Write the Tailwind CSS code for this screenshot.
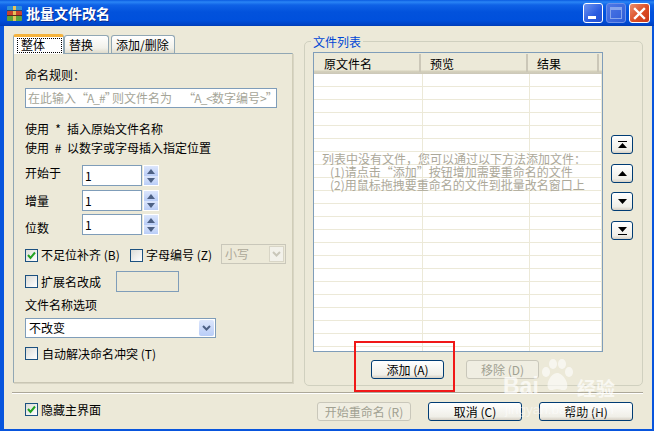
<!DOCTYPE html>
<html lang="zh-CN">
<head>
    <meta charset="UTF-8">
    <meta name="viewport" content="width=device-width, initial-scale=1.0">
    <title>批量文件改名</title>
    <script src="https://cdn.jsdelivr.net/npm/@tailwindcss/browser@4"></script>
</head>
<body class="bg-[#ece9d8] overflow-hidden">

<div class="relative w-[654px] h-[431px] flex flex-col bg-[#0855dd] text-[12px] leading-[14px] text-black font-['Noto_Sans_CJK_SC','Noto_Sans',sans-serif] overflow-hidden">

    <!-- Title bar -->
    <div class="h-[26px] flex items-center shrink-0 bg-[linear-gradient(to_bottom,#0a5be0_0,#2a85f5_2px,#0f62e6_5px,#0252dc_12px,#0050dc_20px,#0042c4_25px,#003bb0_26px)]">
        <svg class="ml-[6px] w-[17px] h-[17px]" viewBox="0 0 17 17">
            <rect x="1" y="1" width="15" height="5" rx="1" fill="#2f8fd8"/>
            <rect x="1" y="6" width="15" height="5" rx="1" fill="#c8452e"/>
            <rect x="1" y="11" width="15" height="5" rx="1" fill="#5fa33a"/>
            <rect x="7" y="1" width="3" height="15" fill="#e6c25a"/>
            <rect x="1" y="5" width="15" height="1" fill="#1f4a70"/>
            <rect x="1" y="10" width="15" height="1" fill="#5a2a20"/>
        </svg>
        <span class="ml-[3px] text-[14px] font-bold text-white [text-shadow:1px_1px_0_#0f2f90]">批量文件改名</span>
        <div class="ml-auto mr-[4px] flex gap-[3px] items-center">
            <div class="w-[20px] h-[20px] rounded-[3px] border border-white bg-[linear-gradient(135deg,#6d93f0,#2a5ce0_60%,#2450d0)] flex items-end">
                <div class="ml-[4px] mb-[3px] w-[8px] h-[3px] bg-white"></div>
            </div>
            <div class="w-[20px] h-[20px] rounded-[3px] border border-[#6d90e8] bg-[linear-gradient(135deg,#4f78e6,#2d5cd8)] flex items-center justify-center">
                <div class="w-[12px] h-[12px] border border-[#86a4ec] border-t-[3px]"></div>
            </div>
            <div class="w-[21px] h-[20px] rounded-[3px] border border-white bg-[linear-gradient(135deg,#ec8e6e,#dc4d24_55%,#c8381a)] flex items-center justify-center">
                <svg class="w-[13px] h-[13px]" viewBox="0 0 13 13"><path d="M2 2 L11 11 M11 2 L2 11" stroke="#fff" stroke-width="2.4" stroke-linecap="square"/></svg>
            </div>
        </div>
    </div>

    <!-- Client area -->
    <div class="h-[403px] ml-[4px] mr-[2px] shrink-0 bg-[#ece9d8] flex flex-col">
        <div class="h-[366px] flex shrink-0">

            <!-- Left tabs -->
            <div class="ml-[9px] mt-[8px] w-[280px] flex flex-col">
                <div class="h-[19px] flex items-end relative z-10">
                    <div class="w-[51px] h-[20px] -mb-[1px] bg-white border-x border-[#91a7b4] border-t-[3px] border-t-[#f5b33c] rounded-t-[3px] pl-[3px] pt-[1px]">
                        <div class="w-[45px] h-[15px] border border-dotted border-black px-[3px] leading-[12px]">整体</div>
                    </div>
                    <div class="w-[45px] h-[18px] bg-[linear-gradient(to_bottom,#fff,#f2f1ea_70%,#dedbcc)] border border-b-0 border-[#91a7b4] rounded-t-[3px] pl-[4px] pt-[1px] leading-[15px]">替换</div>
                    <div class="ml-[2px] w-[64px] h-[18px] bg-[linear-gradient(to_bottom,#fff,#f2f1ea_70%,#dedbcc)] border border-b-0 border-[#91a7b4] rounded-t-[3px] pl-[4px] pt-[1px] leading-[16px]">添加/删除</div>
                </div>
                <div class="h-[330px] w-[280px] border border-[#91a7b4] border-r-[#d0cdb8] border-b-[#c9c6b4] shadow-[1px_1px_0_#d8d5c4] pl-[11px] flex flex-col">
                    <div class="mt-[14px] h-[14px]">命名规则：</div>
                    <div class="mt-[6px] w-[252px] h-[20px] border border-[#7f9db9] bg-white pl-[2px] text-[#a5a598] leading-[18px] whitespace-nowrap overflow-hidden">在此输入<span class="inline-block w-[36px] text-center tracking-[-1px]">“A_#”</span>则文件名为<span class="inline-block w-[40px] text-right tracking-[-1px]">“A_&lt;</span>数字编号<span class="tracking-[-1px]">&gt;”</span></div>
                    <div class="mt-[14px] h-[14px] whitespace-nowrap">使用<span class="inline-block w-[18px] text-center">*</span>插入原始文件名称</div>
                    <div class="mt-[5px] h-[14px] whitespace-nowrap">使用<span class="inline-block w-[18px] text-center">#</span>以数字或字母插入指定位置</div>

                    <div class="mt-[10px] flex h-[21px]">
                        <div class="w-[57px] mt-[1px]">开始于</div>
                        <input class="w-[60px] h-[21px] border border-[#7f9db9] bg-white px-[2px] outline-none" value="1">
                        <div class="ml-[1px] w-[16px] h-[21px] border border-white flex flex-col">
                            <div class="h-[10px] bg-[linear-gradient(to_bottom,#dce6fc,#b9cdf7)] flex items-center justify-center"><svg class="w-[8px] h-[5px]" viewBox="0 0 8 5"><path d="M4 0 L8 5 L0 5 Z" fill="#4d6185"/></svg></div>
                            <div class="h-[9px] bg-[linear-gradient(to_bottom,#dce6fc,#b9cdf7)] flex items-center justify-center"><svg class="w-[8px] h-[5px]" viewBox="0 0 8 5"><path d="M0 0 L8 0 L4 5 Z" fill="#4d6185"/></svg></div>
                        </div>
                    </div>
                    <div class="mt-[4px] flex h-[21px]">
                        <div class="w-[57px] mt-[4px]">增量</div>
                        <input class="w-[60px] h-[21px] border border-[#7f9db9] bg-white px-[2px] outline-none" value="1">
                        <div class="ml-[1px] w-[16px] h-[21px] border border-white flex flex-col">
                            <div class="h-[10px] bg-[linear-gradient(to_bottom,#dce6fc,#b9cdf7)] flex items-center justify-center"><svg class="w-[8px] h-[5px]" viewBox="0 0 8 5"><path d="M4 0 L8 5 L0 5 Z" fill="#4d6185"/></svg></div>
                            <div class="h-[9px] bg-[linear-gradient(to_bottom,#dce6fc,#b9cdf7)] flex items-center justify-center"><svg class="w-[8px] h-[5px]" viewBox="0 0 8 5"><path d="M0 0 L8 0 L4 5 Z" fill="#4d6185"/></svg></div>
                        </div>
                    </div>
                    <div class="mt-[3px] flex h-[21px]">
                        <div class="w-[57px] mt-[7px]">位数</div>
                        <input class="w-[60px] h-[21px] border border-[#7f9db9] bg-white px-[2px] outline-none" value="1">
                        <div class="ml-[1px] w-[16px] h-[21px] border border-white flex flex-col">
                            <div class="h-[10px] bg-[linear-gradient(to_bottom,#dce6fc,#b9cdf7)] flex items-center justify-center"><svg class="w-[8px] h-[5px]" viewBox="0 0 8 5"><path d="M4 0 L8 5 L0 5 Z" fill="#4d6185"/></svg></div>
                            <div class="h-[9px] bg-[linear-gradient(to_bottom,#dce6fc,#b9cdf7)] flex items-center justify-center"><svg class="w-[8px] h-[5px]" viewBox="0 0 8 5"><path d="M0 0 L8 0 L4 5 Z" fill="#4d6185"/></svg></div>
                        </div>
                    </div>

                    <div class="mt-[9px] h-[20px] flex items-center">
                        <div class="w-[13px] h-[13px] mt-[2px] border border-[#1c5180] bg-[linear-gradient(135deg,#dcdcd7,#fff)] flex items-center justify-center">
                            <svg class="w-[9px] h-[9px]" viewBox="0 0 9 9"><path d="M1 4 L3.5 7 L8 1.5" fill="none" stroke="#21a121" stroke-width="2"/></svg>
                        </div>
                        <span class="ml-[3px] w-[89px] mt-[2px] whitespace-pre">不足位补齐 (B)</span>
                        <div class="w-[13px] h-[13px] mt-[2px] border border-[#1c5180] bg-[linear-gradient(135deg,#dcdcd7,#fff)]"></div>
                        <span class="ml-[3px] w-[75px] mt-[2px] whitespace-pre">字母编号 (Z)</span>
                        <div class="w-[65px] h-[20px] border border-[#c9c7ba] bg-[#ece9d8] flex items-center pl-[3px] text-[#aca899]">
                            小写
                            <div class="ml-auto mr-[1px] w-[15px] h-[16px] bg-[#f2f1ea] border border-[#d8d5c6] flex items-center justify-center"><svg class="w-[9px] h-[6px]" viewBox="0 0 9 6"><path d="M1 1 L4.5 4.5 L8 1" fill="none" stroke="#c9c7ba" stroke-width="2"/></svg></div>
                        </div>
                    </div>

                    <div class="mt-[7px] h-[21px] flex items-center">
                        <div class="w-[13px] h-[13px] border border-[#1c5180] bg-[linear-gradient(135deg,#dcdcd7,#fff)]"></div>
                        <span class="ml-[3px] w-[75px]">扩展名改成</span>
                        <div class="w-[63px] h-[21px] border border-[#7f9db9] bg-[#ece9d8]"></div>
                    </div>
                    <div class="mt-[6px] h-[14px]">文件名称选项</div>
                    <div class="mt-[6px] w-[191px] h-[20px] border border-[#7f9db9] bg-white flex items-center pl-[3px]">
                        不改变
                        <div class="ml-auto mr-[1px] w-[15px] h-[16px] rounded-[2px] bg-[linear-gradient(to_bottom,#dce6fc,#b9cdf7)] flex items-center justify-center"><svg class="w-[9px] h-[6px]" viewBox="0 0 9 6"><path d="M1 1 L4.5 4.5 L8 1" fill="none" stroke="#4d6185" stroke-width="2"/></svg></div>
                    </div>
                    <div class="mt-[9px] h-[13px] flex items-center">
                        <div class="w-[13px] h-[13px] border border-[#1c5180] bg-[linear-gradient(135deg,#dcdcd7,#fff)]"></div>
                        <span class="ml-[4px] whitespace-pre">自动解决命名冲突 (T)</span>
                    </div>
                </div>
            </div>

            <!-- File list group -->
            <div class="relative ml-[11px] mt-[15px] w-[339px] h-[345px] border border-[#d0d0bf] rounded-[5px] pl-[8px] pt-[10px] flex flex-col">
                <div class="absolute left-[6px] -top-[7px] bg-[#ece9d8] px-[2px] text-[#0046d5]">文件列表</div>
                <div class="flex">
                    <div class="relative w-[290px] h-[300px] border border-[#7f9db9] bg-white flex flex-col overflow-hidden">
                        <div class="h-[21px] shrink-0 flex bg-[linear-gradient(to_bottom,#ece9d8_0,#ece9d8_17px,#d6d2bd_18px,#cbc7b8_21px)]">
                            <div class="w-[107px] h-[18px] pl-[10px] pt-[3px] border-r-2 border-[#cbc7b8] shrink-0 mt-[1px]">原文件名</div>
                            <div class="w-[107px] h-[18px] pl-[9px] pt-[3px] border-r-2 border-[#cbc7b8] shrink-0 mt-[1px]">预览</div>
                            <div class="w-[71px] h-[18px] pl-[9px] pt-[3px] border-r-2 border-[#cbc7b8] shrink-0 mt-[1px]">结果</div>
                        </div>
                        <div class="flex-1 flex bg-[repeating-linear-gradient(to_bottom,#fff_0,#fff_12px,#ece9d8_12px,#ece9d8_13px)]">
                            <div class="w-[109px] border-r border-[#ece9d8]"></div>
                            <div class="w-[107px] border-r border-[#ece9d8]"></div>
                            <div class="w-[72px] border-r border-[#ece9d8]"></div>
                        </div>
                        <div class="absolute left-[8px] top-[99px] text-[#aca899] leading-[13px] whitespace-pre">列表中没有文件，您可以通过以下方法添加文件：
   (1)请点击“添加”按钮增加需要重命名的文件
   (2)用鼠标拖拽要重命名的文件到批量改名窗口上</div>
                    </div>

                    <div class="ml-[8px] mt-[83px] flex flex-col">
                        <button class="w-[22px] h-[19px] border border-[#003c74] rounded-[3px] bg-[linear-gradient(to_bottom,#fff,#f0efe8_80%,#d6d0c5)] flex items-center justify-center"><svg class="w-[9px] h-[8px]" viewBox="0 0 9 8"><path d="M0 0 H9 V1 H0 Z M4.5 2 L9 7 H0 Z" fill="#000"/></svg></button>
                        <button class="mt-[10px] w-[22px] h-[19px] border border-[#003c74] rounded-[3px] bg-[linear-gradient(to_bottom,#fff,#f0efe8_80%,#d6d0c5)] flex items-center justify-center"><svg class="w-[9px] h-[5px]" viewBox="0 0 9 5"><path d="M4.5 0 L9 5 H0 Z" fill="#000"/></svg></button>
                        <button class="mt-[9px] w-[22px] h-[19px] border border-[#003c74] rounded-[3px] bg-[linear-gradient(to_bottom,#fff,#f0efe8_80%,#d6d0c5)] flex items-center justify-center"><svg class="w-[9px] h-[5px]" viewBox="0 0 9 5"><path d="M0 0 H9 L4.5 5 Z" fill="#000"/></svg></button>
                        <button class="mt-[10px] w-[22px] h-[19px] border border-[#003c74] rounded-[3px] bg-[linear-gradient(to_bottom,#fff,#f0efe8_80%,#d6d0c5)] flex items-center justify-center"><svg class="w-[9px] h-[8px]" viewBox="0 0 9 8"><path d="M0 0 H9 L4.5 5 Z M0 7 H9 V8 H0 Z" fill="#000"/></svg></button>
                    </div>
                </div>
                <div class="mt-[8px] ml-[58px] flex gap-[22px]">
                    <button class="w-[73px] h-[19px] border border-[#003c74] rounded-[3px] bg-[linear-gradient(to_bottom,#fff,#f0efe8_80%,#d6d0c5)] whitespace-pre">添加 (A)</button>
                    <button class="w-[73px] h-[19px] border border-[#c9c7ba] rounded-[3px] bg-[#f0eee2] text-[#a1a192] whitespace-pre">移除 (D)</button>
                </div>
            </div>
        </div>

        <!-- Separator -->
        <div class="ml-[8px] w-[631px] h-[2px] shrink-0 bg-[#aca899] border-b border-white"></div>

        <!-- Footer -->
        <div class="flex">
            <div class="ml-[21px] mt-[9px] h-[13px] flex items-center">
                <div class="w-[13px] h-[13px] border border-[#1c5180] bg-[linear-gradient(135deg,#dcdcd7,#fff)] flex items-center justify-center">
                    <svg class="w-[9px] h-[9px]" viewBox="0 0 9 9"><path d="M1 4 L3.5 7 L8 1.5" fill="none" stroke="#21a121" stroke-width="2"/></svg>
                </div>
                <span class="ml-[3px]">隐藏主界面</span>
            </div>
            <div class="ml-auto mr-[19px] mt-[8px] flex gap-[17px]">
                <button class="w-[94px] h-[19px] border border-[#c9c7ba] rounded-[3px] bg-[#f0eee2] text-[#a1a192] whitespace-pre">开始重命名 (R)</button>
                <button class="w-[94px] h-[19px] border border-[#003c74] rounded-[3px] bg-[linear-gradient(to_bottom,#fff,#f0efe8_80%,#d6d0c5)] whitespace-pre">取消 (C)</button>
                <button class="w-[94px] h-[19px] border border-[#003c74] rounded-[3px] bg-[linear-gradient(to_bottom,#fff,#f0efe8_80%,#d6d0c5)] whitespace-pre">帮助 (H)</button>
            </div>
        </div>
    </div>

    <!-- Red annotation box -->
    <div class="absolute left-[354px] top-[341px] w-[101px] h-[51px] border-2 border-[#f01818] pointer-events-none"></div>

    <!-- Baidu watermark -->
    <div class="absolute left-[503px] top-[358px] w-[120px] h-[60px] pointer-events-none text-white/70">
        <svg class="absolute left-[38px] top-[1px] w-[32px] h-[34px]" viewBox="0 0 32 34" fill="#fff" fill-opacity="0.6">
            <ellipse cx="5" cy="13" rx="4" ry="5"/>
            <ellipse cx="12" cy="5" rx="4" ry="5"/>
            <ellipse cx="21" cy="5" rx="4" ry="5"/>
            <ellipse cx="28" cy="13" rx="4" ry="5"/>
            <path d="M16 14 C10 14 5 24 7 29 C9 33 13 30 16 30 C19 30 24 33 26 29 C28 24 22 14 16 14 Z"/>
        </svg>
        <span class="absolute left-0 top-[18px] text-[23px] leading-[21px] font-bold font-['Liberation_Sans',sans-serif]">Bai</span>
        <span class="absolute left-[74px] top-[20px] text-[19px] leading-[20px] font-bold">经验</span>
        <span class="absolute left-[2px] top-[44px] text-[13.5px] leading-[15px] text-white/50 font-['Liberation_Sans',sans-serif]">jingyan.baidu.com</span>
    </div>
</div>

</body>
</html>
